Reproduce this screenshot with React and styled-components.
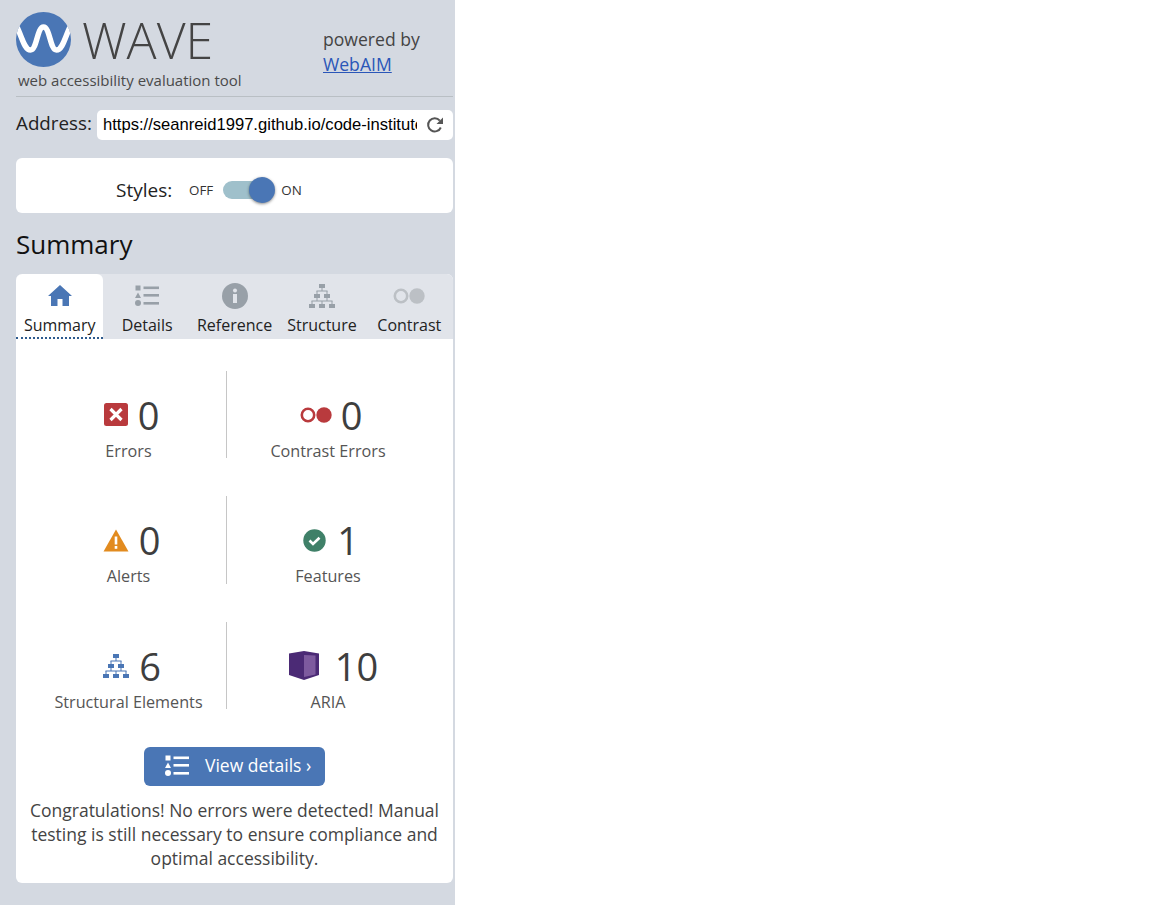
import React from "react";
import styled, { createGlobalStyle } from "styled-components";

const Global = createGlobalStyle`
  html, body { margin: 0; padding: 0; background: #fff; }
  body { font-family: "Open Sans", "Liberation Sans", sans-serif; color: #444; }
`;
const Sidebar = styled.div`
  width: 455px; height: 905px; box-sizing: border-box; background: #d4d9e1;
  padding: 0 2px 0 16px; display: flex; flex-direction: column; overflow: hidden;
`;
const Header = styled.div`
  height: 97px; box-sizing: border-box; border-bottom: 1px solid #b9bfc4; display: flex; flex: none; width: 437px;
`;
const Brand = styled.div`
  width: 307px; display: flex; flex-direction: column; padding-top: 12px;
`;
const BrandRow = styled.div` display: flex; align-items: center; height: 54px; gap: 11px; `;
const Wordmark = styled.div`
  font-size: 50px; font-weight: 300; color: #444; line-height: 54px; margin-top: 1px;
`;
const Tagline = styled.div`
  font-size: 15px; color: #4a4a4a; line-height: 20px; margin: 4px 0 0 2px; white-space: nowrap;
`;
const Powered = styled.div`
  font-size: 17.6px; line-height: 25px; color: #444; padding-top: 27px; white-space: nowrap;
  a { color: #2a56b8; text-decoration: underline; display: block; }
`;
const AddressRow = styled.div`
  display: flex; align-items: center; height: 30px; margin-top: 13px; flex: none; width: 437px;
`;
const AddressLabel = styled.label` font-size: 18.8px; color: #222; width: 81px; flex: none; position: relative; top: -2px; `;
const AddressBox = styled.div`
  flex: 1; height: 30px; background: #fff; border-radius: 5px; display: flex; align-items: center; padding: 0 9px 0 6px; gap: 9px; min-width: 0;
`;
const Url = styled.div`
  flex: 1; min-width: 0; overflow: hidden; white-space: nowrap; font-family: "Liberation Sans", Arial, sans-serif; font-size: 16.6px; color: #000;
`;
const StylesCard = styled.div`
  flex: none; width: 437px; height: 55px; margin-top: 18px; background: #fff; border-radius: 6px; display: flex; align-items: center; padding: 8px 0 0 100px; box-sizing: border-box; color: #222;
`;
const StylesLabel = styled.span` font-size: 19px; width: 73px; `;
const SwitchText = styled.span` font-size: 13.4px; color: #333; `;
const Track = styled.div`
  position: relative; width: 39px; height: 18px; border-radius: 9px; background: #9fc0cb; margin-left: 10px;
`;
const Knob = styled.div`
  position: absolute; right: -13px; top: -4px; width: 26px; height: 26px; border-radius: 50%; background: #4a76b5; box-shadow: 0 1px 3px rgba(0,0,0,.45);
`;
const OnText = styled(SwitchText)` margin-left: 19px; `;
const Title = styled.h2`
  margin: 14px 0 13px; font-size: 26px; font-weight: 400; line-height: 34px; color: #111; flex: none;
`;
const Panel = styled.div`
  flex: none; width: 437px; background: #fff; border-radius: 6px; overflow: hidden;
`;
const Tabs = styled.div` display: flex; height: 65px; background: #e1e4ea; `;
const Tab = styled.div`
  flex: 1; display: flex; flex-direction: column; align-items: center; box-sizing: border-box; min-width: 0;
  background: ${p => (p.$active ? "#fff" : "transparent")};
  border-radius: ${p => (p.$active ? "6px 6px 0 0" : "0")};
  border-bottom: ${p => (p.$active ? "2px dotted #2d5a8e" : "none")};
  color: #222; font-size: 16px; white-space: nowrap;
`;
const TabIcon = styled.div` height: 29px; margin-top: 7px; display: flex; align-items: center; justify-content: center; `;
const TabLabel = styled.span` line-height: 22px; margin-top: 4px; `;
const Stats = styled.div`
  display: grid; grid-template-columns: 211px 202px; padding-top: 31.9px; row-gap: 38px;
`;
const Stat = styled.div`
  height: 87.5px; display: flex; flex-direction: column; align-items: center; box-sizing: border-box;
  border-right: ${p => (p.$divider ? "1px solid #c6c6c6" : "none")};
  padding-left: ${p => (p.$divider ? "15px" : "0")};
`;
const StatTop = styled.div`
  display: flex; align-items: center; justify-content: center; gap: ${p => p.$gap}px; height: 44px; margin-top: 22px; padding-left: ${p => p.$shift}px;
`;
const StatNum = styled.span` font-size: 38px; line-height: 44px; color: #3e3e3e; `;
const StatLabel = styled.div` font-size: 16.2px; line-height: 16px; color: #555; margin-top: 6px; white-space: nowrap; `;
const ViewBtn = styled.div`
  width: 181px; height: 39px; background: #4a76b5; border-radius: 6px; color: #fff; margin: 37.2px auto 0; display: flex; align-items: center; font-size: 17.5px; padding: 0 0 2px 21px; gap: 16px; box-sizing: border-box;
`;
const Message = styled.p`
  margin: 12px 0 0; padding: 0 8px 13px; text-align: center; font-size: 17.5px; line-height: 24px; color: #444;
`;

const Logo = () => (
  <svg width="55" height="55" viewBox="0 0 55 55">
    <defs>
      <clipPath id="logo-disc"><circle cx="27.5" cy="27.5" r="27.5" /></clipPath>
    </defs>
    <circle cx="27.5" cy="27.5" r="27.5" fill="#4a76b5" />
    <path clipPath="url(#logo-disc)" d="M0 13 C6 24 8 38 14.5 38 C21 38 21 15 27.5 15 C34 15 34 38 40.5 38 C47 38 49 24 55 13" fill="none" stroke="#fff" strokeWidth="5.5" />
  </svg>
);
const Reload = () => (
  <svg width="18" height="18" viewBox="0 0 18 18" fill="none">
    <path d="M14.8 11.5A6.6 6.6 0 1 1 13.8 4.6" stroke="#555" strokeWidth="2" />
    <path d="M17 1.5v6.5h-6.5z" fill="#555" />
  </svg>
);
const Home = () => (
  <svg width="24" height="21" viewBox="0 0 24 21">
    <path d="M12 0 L24 11 H21 V21 H14.5 V14 H9.5 V21 H3 V11 H0 Z" fill="#4a76b5" />
  </svg>
);
const ListIcon = ({ color }) => (
  <svg width="24" height="21" viewBox="0 0 24 21" fill={color}>
    <rect x="0.5" y="0.5" width="5" height="5" />
    <path d="M3 7.5 L6 13 H0 Z" />
    <circle cx="3" cy="18" r="3" />
    <rect x="8.5" y="1.5" width="15.5" height="2.6" />
    <rect x="8.5" y="9" width="15.5" height="2.6" />
    <rect x="8.5" y="17" width="15.5" height="2.6" />
  </svg>
);
const Info = () => (
  <svg width="26" height="26" viewBox="0 0 26 26">
    <circle cx="13" cy="13" r="13" fill="#98a0a8" />
    <circle cx="13" cy="7.5" r="2" fill="#e1e4ea" />
    <rect x="11" y="11" width="4" height="9" fill="#e1e4ea" />
  </svg>
);
const Tree = ({ color }) => (
  <svg width="26" height="24" viewBox="0 0 26 24" fill={color}>
    <rect x="10" y="0" width="6" height="4" />
    <rect x="5" y="10" width="6" height="4" />
    <rect x="15" y="10" width="6" height="4" />
    <rect x="0" y="20" width="6" height="4" />
    <rect x="10" y="20" width="6" height="4" />
    <rect x="20" y="20" width="6" height="4" />
    <rect x="12.5" y="4" width="1" height="3" />
    <rect x="7.5" y="6.5" width="11" height="1" />
    <rect x="7.5" y="7" width="1" height="3" />
    <rect x="17.5" y="7" width="1" height="3" />
    <rect x="2.5" y="16.5" width="21" height="1" />
    <rect x="7.5" y="14" width="1" height="3" />
    <rect x="17.5" y="14" width="1" height="3" />
    <rect x="2.5" y="17" width="1" height="3" />
    <rect x="12.5" y="17" width="1" height="3" />
    <rect x="22.5" y="17" width="1" height="3" />
  </svg>
);
const Pair = ({ color }) => (
  <svg width="32" height="16" viewBox="0 0 32 16">
    <circle cx="8" cy="8" r="6.2" fill="none" stroke={color} strokeWidth="2.6" />
    <circle cx="24" cy="8" r="7.7" fill={color} />
  </svg>
);
const ErrorIcon = () => (
  <svg width="24" height="23" viewBox="0 0 24 23">
    <rect width="24" height="23" rx="2.5" fill="#b93a3d" />
    <path d="M6.5 6 L17.5 17 M17.5 6 L6.5 17" stroke="#fff" strokeWidth="3.2" />
  </svg>
);
const Alert = () => (
  <svg width="26" height="23" viewBox="0 0 26 23">
    <path d="M13 0.5 L25.5 22.5 H0.5 Z" fill="#e28b1f" />
    <rect x="11.7" y="7.5" width="2.6" height="8" fill="#fff" />
    <rect x="11.7" y="17" width="2.6" height="2.8" fill="#fff" />
  </svg>
);
const Check = () => (
  <svg width="23" height="23" viewBox="0 0 23 23">
    <circle cx="11.5" cy="11.5" r="11.2" fill="#3f8068" />
    <path d="M6.5 11.5 L10 15 L16.5 8.8" fill="none" stroke="#fff" strokeWidth="2.6" />
  </svg>
);
const Aria = () => (
  <svg width="30" height="29" viewBox="0 0 30 29">
    <path d="M0 2.5 L15 0 L30 2.5 V24 L15 29 L0 24 Z" fill="#4b2a75" />
    <path d="M15 4 L26.5 4.5 V23.5 L15 26 Z" fill="#7d5a9e" />
  </svg>
);

const stats = [
  { icon: <ErrorIcon />, num: 0, label: "Errors", divider: true, gap: 10, shift: 6 },
  { icon: <Pair color="#b93a3d" />, num: 0, label: "Contrast Errors", gap: 9, shift: 6 },
  { icon: <Alert />, num: 0, label: "Alerts", divider: true, gap: 10, shift: 6 },
  { icon: <Check />, num: 1, label: "Features", gap: 11, shift: 6 },
  { icon: <Tree color="#4a76b5" />, num: 6, label: "Structural Elements", divider: true, gap: 10, shift: 7 },
  { icon: <Aria />, num: 10, label: "ARIA", gap: 16, shift: 11 },
];

export default function App() {
  return (
    <>
      <Global />
      <Sidebar>
        <Header>
          <Brand>
            <BrandRow>
              <Logo />
              <Wordmark>WAVE</Wordmark>
            </BrandRow>
            <Tagline>web accessibility evaluation tool</Tagline>
          </Brand>
          <Powered>
            powered by
            <a href="#webaim">WebAIM</a>
          </Powered>
        </Header>
        <AddressRow>
          <AddressLabel>Address:</AddressLabel>
          <AddressBox>
            <Url>https://seanreid1997.github.io/code-institute</Url>
            <Reload />
          </AddressBox>
        </AddressRow>
        <StylesCard>
          <StylesLabel>Styles:</StylesLabel>
          <SwitchText>OFF</SwitchText>
          <Track><Knob /></Track>
          <OnText>ON</OnText>
        </StylesCard>
        <Title>Summary</Title>
        <Panel>
          <Tabs>
            <Tab $active><TabIcon><Home /></TabIcon><TabLabel>Summary</TabLabel></Tab>
            <Tab><TabIcon><ListIcon color="#98a0a8" /></TabIcon><TabLabel>Details</TabLabel></Tab>
            <Tab><TabIcon><Info /></TabIcon><TabLabel>Reference</TabLabel></Tab>
            <Tab><TabIcon><Tree color="#98a0a8" /></TabIcon><TabLabel>Structure</TabLabel></Tab>
            <Tab><TabIcon><Pair color="#bcc0c5" /></TabIcon><TabLabel>Contrast</TabLabel></Tab>
          </Tabs>
          <Stats>
            {stats.map(s => (
              <Stat key={s.label} $divider={s.divider}>
                <StatTop $gap={s.gap} $shift={s.shift}>
                  {s.icon}
                  <StatNum>{s.num}</StatNum>
                </StatTop>
                <StatLabel>{s.label}</StatLabel>
              </Stat>
            ))}
          </Stats>
          <ViewBtn>
            <ListIcon color="#fff" />
            <span>View details ›</span>
          </ViewBtn>
          <Message>
            Congratulations! No errors were detected! Manual testing is still necessary to ensure compliance and optimal accessibility.
          </Message>
        </Panel>
      </Sidebar>
    </>
  );
}
